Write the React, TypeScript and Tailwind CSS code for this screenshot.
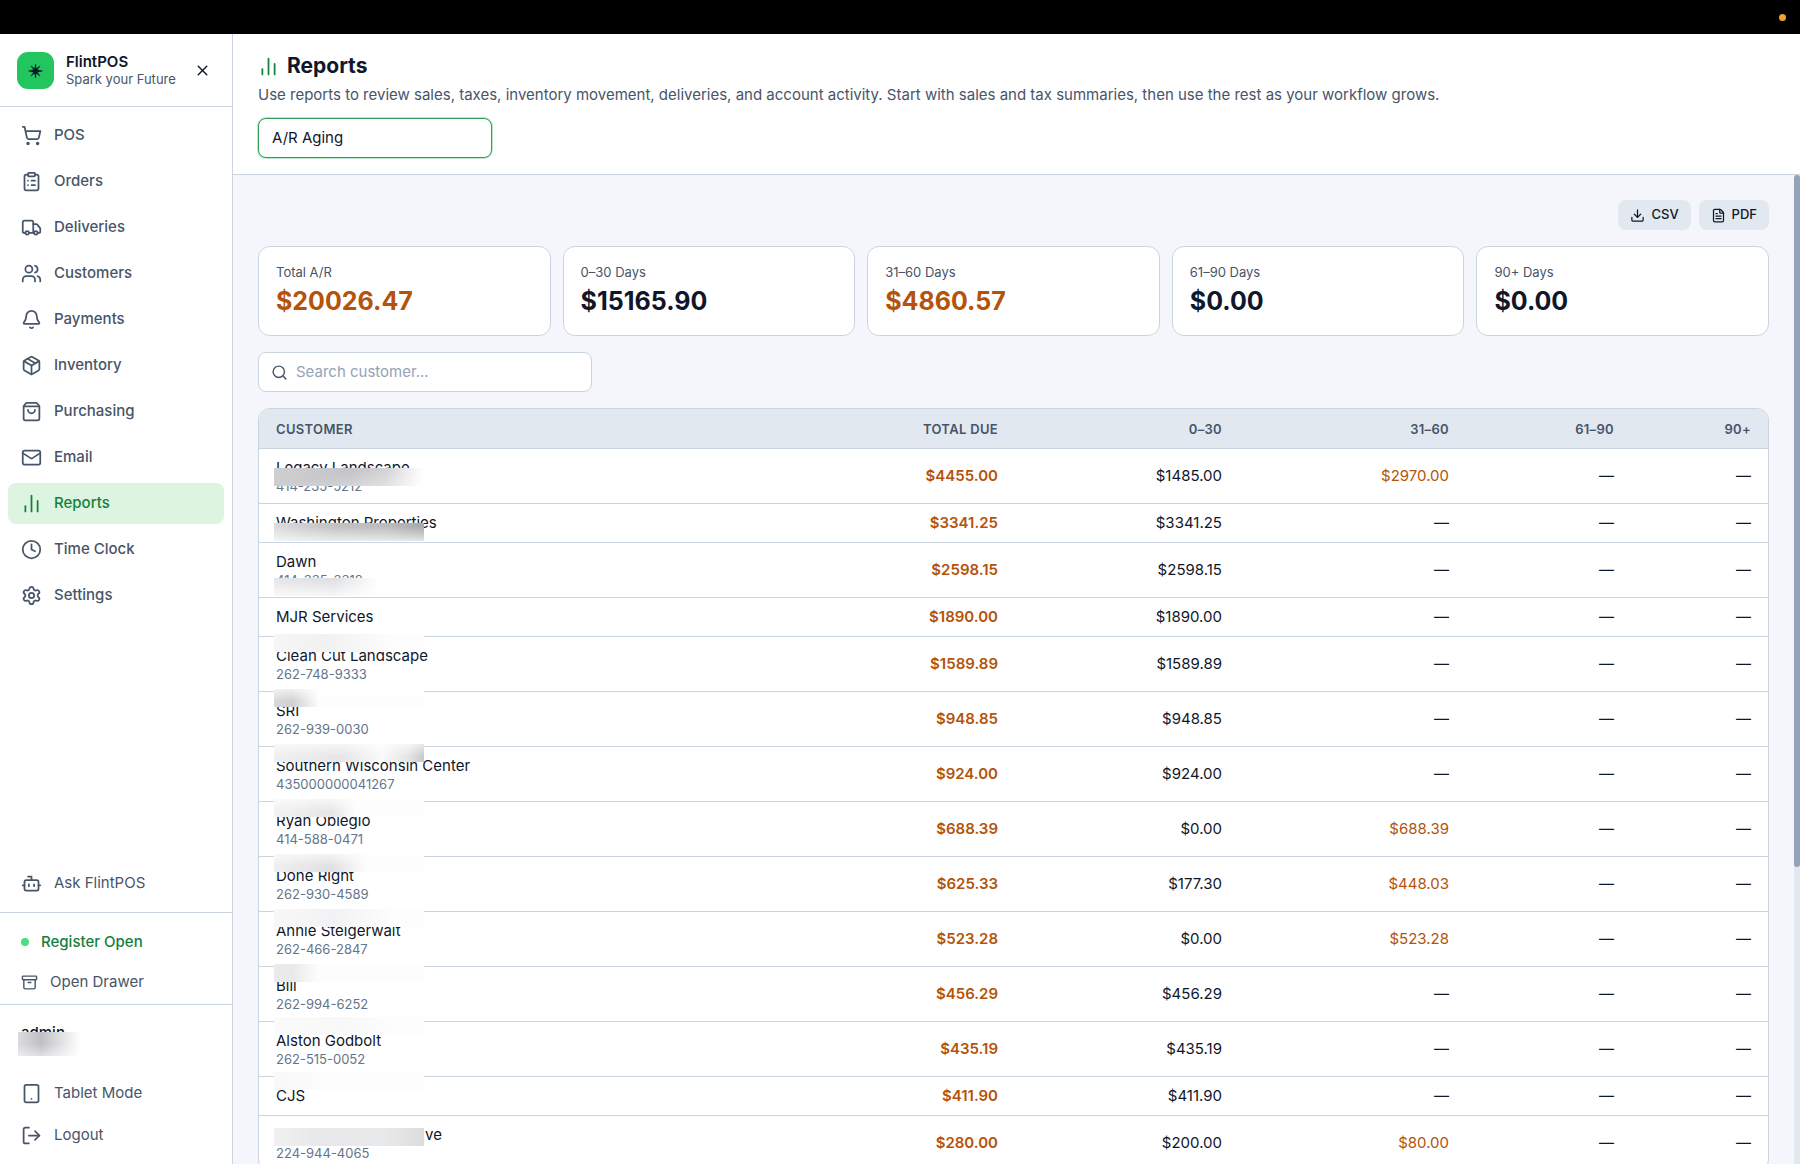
import {
    Archive,
    Bell,
    Bot,
    ChartNoAxesColumn,
    ClipboardList,
    Clock,
    Download,
    FileText,
    LogOut,
    Mail,
    Package,
    Search,
    Settings,
    ShoppingBag,
    ShoppingCart,
    Tablet,
    Truck,
    Users,
    X,
} from 'lucide-react';
import type { LucideIcon } from 'lucide-react';
import { useState } from 'react';

interface INavItem {
    label: string;
    icon: LucideIcon;
}

interface ICustomer {
    name: string;
    phone?: string;
    total: string;
    current: string;
    days31?: string;
    mask?: string;
    indent?: boolean; // only the end of the name is known, it starts after the mask
}

const navItems: INavItem[] = [
    { label: 'POS', icon: ShoppingCart },
    { label: 'Orders', icon: ClipboardList },
    { label: 'Deliveries', icon: Truck },
    { label: 'Customers', icon: Users },
    { label: 'Payments', icon: Bell },
    { label: 'Inventory', icon: Package },
    { label: 'Purchasing', icon: ShoppingBag },
    { label: 'Email', icon: Mail },
    { label: 'Reports', icon: ChartNoAxesColumn },
    { label: 'Time Clock', icon: Clock },
    { label: 'Settings', icon: Settings },
];

const summary = [
    { label: 'Total A/R', value: '$20026.47', due: true },
    { label: '0–30 Days', value: '$15165.90', due: false },
    { label: '31–60 Days', value: '$4860.57', due: true },
    { label: '61–90 Days', value: '$0.00', due: false },
    { label: '90+ Days', value: '$0.00', due: false },
];

// mask holds the privacy smudge drawn over part of a customer cell
const customers: ICustomer[] = [
    { name: 'Legacy Landscape', phone: '414-235-5212', total: '$4455.00', current: '$1485.00', days31: '$2970.00', mask: 'top-[19px] bg-[linear-gradient(170deg,transparent_40%,#ffffff80),linear-gradient(90deg,#cfcfd2_0%,#c4c5c8_50%,#d0d0d3_75%,#ffffff_100%)]' },
    { name: 'Washington Properties', total: '$3341.25', current: '$3341.25', mask: 'top-[19px] bg-[linear-gradient(180deg,transparent_20%,#ffffffb0),linear-gradient(90deg,#dcdcde_0%,#c2c2c5_40%,#bcbcbf_75%,#a9a9ac_100%)]' },
    { name: 'Dawn', phone: '414-335-3318', total: '$2598.15', current: '$2598.15', mask: 'top-[35px] bg-[linear-gradient(180deg,transparent_10%,#ffffffc0),linear-gradient(90deg,#e6e6e8_0%,#dfe0e2_40%,#ffffff_70%)]' },
    { name: 'MJR Services', total: '$1890.00', current: '$1890.00' },
    { name: 'Clean Cut Landscape', phone: '262-748-9333', total: '$1589.89', current: '$1589.89', mask: '-top-[3px] bg-[linear-gradient(90deg,#f6f6f7_0%,#f1f1f2_35%,#fdfdfd_80%)]' },
    { name: 'SRI', phone: '262-939-0030', total: '$948.85', current: '$948.85', mask: '-top-[3px] bg-[linear-gradient(0deg,transparent_30%,#ffffffb0),linear-gradient(90deg,#d8d8db_0%,#d0d0d3_12%,#fdfdfd_30%)]' },
    { name: 'Southern Wisconsin Center', phone: '435000000041267', total: '$924.00', current: '$924.00', mask: '-top-[3px] bg-[linear-gradient(0deg,transparent_30%,#ffffffa0),linear-gradient(90deg,#f0f0f1_0%,#e6e6e8_45%,#fafafa_72%,#e4e4e6_90%,#c8c8cb_100%)]' },
    { name: 'Ryan Obieglo', phone: '414-588-0471', total: '$688.39', current: '$0.00', days31: '$688.39', mask: '-top-[3px] bg-[linear-gradient(0deg,transparent_30%,#ffffffa0),linear-gradient(90deg,#f2f2f3_0%,#e6e6e8_38%,#fdfdfd_55%)]' },
    { name: 'Done Right', phone: '262-930-4589', total: '$625.33', current: '$177.30', days31: '$448.03', mask: '-top-[3px] bg-[linear-gradient(0deg,transparent_30%,#ffffffa0),linear-gradient(90deg,#efeff0_0%,#e0e0e2_38%,#fdfdfd_62%)]' },
    { name: 'Annie Steigerwalt', phone: '262-466-2847', total: '$523.28', current: '$0.00', days31: '$523.28', mask: '-top-[3px] bg-[linear-gradient(90deg,#f8f8f9_0%,#f2f2f4_40%,#fdfdfd_80%)]' },
    { name: 'Bill', phone: '262-994-6252', total: '$456.29', current: '$456.29', mask: '-top-[3px] bg-[linear-gradient(90deg,#ebebec_0%,#e9e9eb_12%,#fdfdfd_30%)]' },
    { name: 'Alston Godbolt', phone: '262-515-0052', total: '$435.19', current: '$435.19', mask: '-top-[5px] bg-[linear-gradient(90deg,#fbfbfb_0%,#f8f8f9_45%,#fdfdfd_80%)]' },
    { name: 'CJS', total: '$411.90', current: '$411.90', mask: '-top-[5px] bg-[linear-gradient(90deg,#f9f9fa_0%,#fafafa_15%,#fdfdfd_35%)]' },
    { name: 've', indent: true, phone: '224-944-4065', total: '$280.00', current: '$200.00', days31: '$80.00', mask: 'top-3 bg-[linear-gradient(90deg,#f0f1f1_0%,#e7e8e9_30%,#e7e8e9_75%,#dcddde_100%)]' },
];

const Logo = () => (
    <svg viewBox="0 0 37 37" className="size-[37px]" aria-hidden="true">
        <rect width="37" height="37" rx="11" fill="#22c55e" />
        <path
            d="M18.5 12l.7 4.800 3.900-2.900-2.900 3.900 5.300 1.200-5.300 1.200 2.900 3.900-3.900-2.900-.7 4.800-.7-4.800-3.900 2.900 2.900-3.900-5.300-1.200 5.300-1.200-2.900-3.900 3.900 2.900z"
            fill="#0f172a"
            stroke="#0f172a"
            strokeWidth="0.5"
        />
    </svg>
);

const Sidebar = () => (
    <aside className="flex w-[233px] shrink-0 flex-col border-r border-[#cbd5e1] bg-white text-[#475569]">
        <div className="flex h-[73px] shrink-0 items-center gap-3 border-b border-[#cbd5e1] px-[17px]">
            <Logo />
            <div className="flex-1">
                <p className="text-[15px] leading-[18px] font-semibold text-[#0f172a]">FlintPOS</p>
                <p className="text-[13px] leading-[17px]">Spark your Future</p>
            </div>
            <button type="button" aria-label="Close menu" className="p-1 text-[#0f172a]">
                <X size={17} />
            </button>
        </div>

        <nav className="flex flex-1 flex-col gap-[5px] px-2 pt-2">
            {navItems.map(({ label, icon: Icon }) => (
                <a
                    key={label}
                    href="#"
                    className={`flex h-[41px] items-center gap-3 rounded-lg px-[13px] text-[15px] font-medium ${
                        label === 'Reports' ? 'bg-[#dcf4e0] text-[#15803d]' : ''
                    }`}
                >
                    <Icon size={21} />
                    {label}
                </a>
            ))}
        </nav>

        <div className="px-2 pb-2">
            <button type="button" className="flex h-[41px] w-full items-center gap-3 px-[13px] text-[15px]">
                <Bot size={21} />
                Ask FlintPOS
            </button>
        </div>

        <div className="flex flex-col border-t border-[#cbd5e1] px-2 pt-[9px] pb-[2px]">
            <button type="button" className="flex h-10 items-center gap-3 px-[13px] text-[15px] font-medium text-[#15803d]">
                <span className="size-2 rounded-full bg-[#4ade80]" />
                Register Open
            </button>
            <button type="button" className="flex h-10 items-center gap-3 px-[13px] text-[15px]">
                <Archive size={17} />
                Open Drawer
            </button>
        </div>

        <div className="flex flex-col gap-px border-t border-[#cbd5e1] px-2 pt-[17px] pb-2">
            <div className="relative mb-[14px] h-9 px-[13px]">
                <p className="text-[15px] leading-[22px] font-medium text-[#0f172a]">admin</p>
                <span className="absolute top-[10px] left-[10px] h-6 w-[66px] bg-[linear-gradient(180deg,transparent_50%,#ffffff80),linear-gradient(90deg,#dcdce0_0%,#bfc0c5_35%,#dcdcdf_60%,#ffffff_95%)]" />
            </div>
            <button type="button" className="flex h-[41px] items-center gap-3 px-[13px] text-[15px]">
                <Tablet size={21} />
                Tablet Mode
            </button>
            <button type="button" className="flex h-[41px] items-center gap-3 px-[13px] text-[15px]">
                <LogOut size={21} />
                Logout
            </button>
        </div>
    </aside>
);

const AgingTable = ({ rows }: { rows: ICustomer[] }) => (
    <div className="shrink-0 overflow-hidden rounded-xl border border-[#cbd5e1] bg-white">
        <table className="w-full table-fixed text-right text-[15px]">
            <thead>
                <tr className="h-[39px] border-b border-[#cbd5e1] bg-[#e2e8f0] text-[13px] tracking-wide text-[#475569]">
                    <th className="px-[17px] pt-[3px] text-left font-semibold">CUSTOMER</th>
                    <th className="w-[150px] px-[17px] pt-[3px] font-semibold">TOTAL DUE</th>
                    <th className="w-[224px] px-[17px] pt-[3px] font-semibold">0–30</th>
                    <th className="w-[227px] px-[17px] pt-[3px] font-semibold">31–60</th>
                    <th className="w-[165px] px-[17px] pt-[3px] font-semibold">61–90</th>
                    <th className="w-[137px] px-[17px] pt-[3px] font-semibold">90+</th>
                </tr>
            </thead>
            <tbody className="text-[#0f172a]">
                {rows.map((row) => (
                    <tr key={row.name} className="border-b border-[#cbd5e1]">
                        <td className="relative px-[17px] py-2 text-left">
                            <p className={`leading-[22px] ${row.indent ? 'pl-[149px]' : ''}`}>{row.name}</p>
                            {row.phone && <p className="pb-[2px] text-[13px] leading-[14px] text-[#64748b]">{row.phone}</p>}
                            {row.mask && <span className={`absolute left-[15px] h-[18px] w-[150px] ${row.mask}`} />}
                        </td>
                        <td className="px-[17px] pt-[2px] font-semibold text-[#b45309]">{row.total}</td>
                        <td className="px-[17px] pt-[2px]">{row.current}</td>
                        <td className={`px-[17px] pt-[2px] ${row.days31 ? 'text-[#b45309]' : ''}`}>{row.days31 ?? '—'}</td>
                        <td className="px-[17px] pt-[2px]">—</td>
                        <td className="px-[17px] pt-[2px]">—</td>
                    </tr>
                ))}
            </tbody>
        </table>
    </div>
);

const App = () => {
    const [report, setReport] = useState('A/R Aging');
    const [query, setQuery] = useState('');

    const rows = customers.filter((c) => c.name.toLowerCase().includes(query.toLowerCase()));

    return (
        <div className="flex h-screen flex-col overflow-hidden bg-white font-[Inter,sans-serif]">
            {/* System bar */}
            <div className="flex h-[34px] shrink-0 items-center justify-end bg-black px-[14px]">
                <span className="size-[7px] rounded-full bg-[#f0a030]" />
            </div>

            <div className="flex min-h-0 flex-1">
                <Sidebar />

                <main className="flex min-w-0 flex-1 flex-col">
                    <header className="shrink-0 border-b border-[#cbd5e1] px-[25px] pt-[17px] pb-4">
                        <h1 className="flex items-center gap-2 text-[21px] leading-[30px] font-bold text-[#0f172a]">
                            <ChartNoAxesColumn size={21} className="text-[#15803d]" />
                            Reports
                        </h1>
                        <p className="mt-[3px] text-[15px] leading-[22px] text-[#475569]">
                            Use reports to review sales, taxes, inventory movement, deliveries, and account activity. Start with sales and tax
                            summaries, then use the rest as your workflow grows.
                        </p>
                        <select
                            aria-label="Report"
                            value={report}
                            onChange={(e) => setReport(e.target.value)}
                            className="mt-3 block h-10 w-[234px] appearance-none rounded-lg border border-[#2f9e57] bg-white px-[13px] text-[15px] text-[#0f172a] ring-1 ring-[#bbe8c8] outline-none"
                        >
                            <option>A/R Aging</option>
                        </select>
                    </header>

                    <div className="flex min-h-0 flex-1 bg-[#f4f6fb]">
                        <div className="flex min-w-0 flex-1 flex-col overflow-hidden pt-[25px] pr-[25px] pl-[25px]">
                            <div className="mb-4 flex shrink-0 justify-end gap-2 text-[13px] font-medium text-[#0f172a]">
                                <button type="button" className="flex h-[30px] items-center gap-[6px] rounded-lg bg-[#e2e8f0] px-3">
                                    <Download size={15} />
                                    CSV
                                </button>
                                <button type="button" className="flex h-[30px] items-center gap-[6px] rounded-lg bg-[#e2e8f0] px-3">
                                    <FileText size={15} />
                                    PDF
                                </button>
                            </div>

                            <div className="mb-4 grid shrink-0 grid-cols-5 gap-3">
                                {summary.map((card) => (
                                    <div key={card.label} className="h-[90px] rounded-xl border border-[#cbd5e1] bg-white px-[17px] pt-4">
                                        <p className="text-[13px] leading-[18px] text-[#475569]">{card.label}</p>
                                        <p className={`mt-1 text-[25px] leading-8 font-bold ${card.due ? 'text-[#b45309]' : 'text-[#0f172a]'}`}>
                                            {card.value}
                                        </p>
                                    </div>
                                ))}
                            </div>

                            <label className="mb-4 flex h-10 w-[334px] shrink-0 items-center gap-2 rounded-lg border border-[#cbd5e1] bg-white px-3 text-[#475569]">
                                <Search size={17} />
                                <input
                                    type="text"
                                    aria-label="Search customer"
                                    placeholder="Search customer..."
                                    value={query}
                                    onChange={(e) => setQuery(e.target.value)}
                                    className="min-w-0 flex-1 text-[15px] outline-none placeholder:text-[#94a3b8]"
                                />
                            </label>

                            <AgingTable rows={rows} />
                        </div>

                        {/* Scroll track */}
                        <div className="w-[6px] shrink-0 bg-[#e2e8f0]">
                            <div className="h-[70%] rounded-full bg-[#94a3b8]" />
                        </div>
                    </div>
                </main>
            </div>
        </div>
    );
};

export default App;
